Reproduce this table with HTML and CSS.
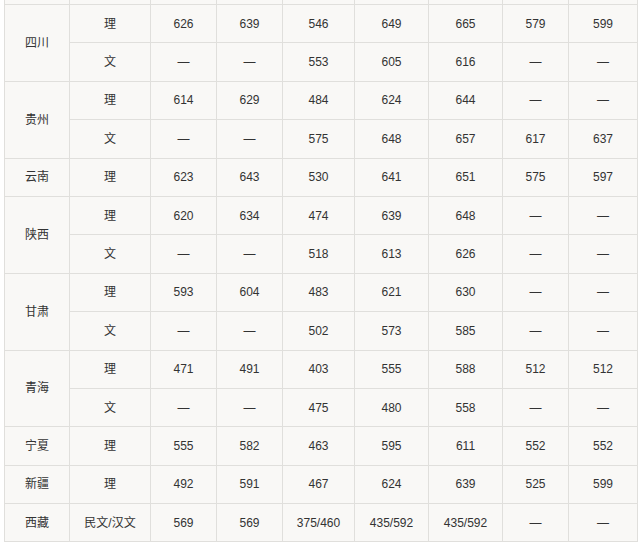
FILE: index.html
```html
<!DOCTYPE html>
<html lang="zh">
<head>
<meta charset="utf-8">
<link rel="stylesheet" href="styles.css">
</head>
<body>
<table class="scores">
  <colgroup>
    <col class="c-prov"><col class="c-type"><col class="c-a"><col class="c-b"><col class="c-c"><col class="c-d"><col class="c-e"><col class="c-f"><col class="c-g">
  </colgroup>
  <tr class="stub"><td></td><td></td><td></td><td></td><td></td><td></td><td></td><td></td><td></td></tr>
  <tr><td rowspan="2" class="prov">四川</td><td>理</td><td>626</td><td>639</td><td>546</td><td>649</td><td>665</td><td>579</td><td>599</td></tr>
  <tr><td>文</td><td>—</td><td>—</td><td>553</td><td>605</td><td>616</td><td>—</td><td>—</td></tr>
  <tr><td rowspan="2" class="prov">贵州</td><td>理</td><td>614</td><td>629</td><td>484</td><td>624</td><td>644</td><td>—</td><td>—</td></tr>
  <tr><td>文</td><td>—</td><td>—</td><td>575</td><td>648</td><td>657</td><td>617</td><td>637</td></tr>
  <tr><td class="prov">云南</td><td>理</td><td>623</td><td>643</td><td>530</td><td>641</td><td>651</td><td>575</td><td>597</td></tr>
  <tr><td rowspan="2" class="prov">陕西</td><td>理</td><td>620</td><td>634</td><td>474</td><td>639</td><td>648</td><td>—</td><td>—</td></tr>
  <tr><td>文</td><td>—</td><td>—</td><td>518</td><td>613</td><td>626</td><td>—</td><td>—</td></tr>
  <tr><td rowspan="2" class="prov">甘肃</td><td>理</td><td>593</td><td>604</td><td>483</td><td>621</td><td>630</td><td>—</td><td>—</td></tr>
  <tr><td>文</td><td>—</td><td>—</td><td>502</td><td>573</td><td>585</td><td>—</td><td>—</td></tr>
  <tr><td rowspan="2" class="prov">青海</td><td>理</td><td>471</td><td>491</td><td>403</td><td>555</td><td>588</td><td>512</td><td>512</td></tr>
  <tr><td>文</td><td>—</td><td>—</td><td>475</td><td>480</td><td>558</td><td>—</td><td>—</td></tr>
  <tr><td class="prov">宁夏</td><td>理</td><td>555</td><td>582</td><td>463</td><td>595</td><td>611</td><td>552</td><td>552</td></tr>
  <tr><td class="prov">新疆</td><td>理</td><td>492</td><td>591</td><td>467</td><td>624</td><td>639</td><td>525</td><td>599</td></tr>
  <tr><td class="prov">西藏</td><td>民文/汉文</td><td>569</td><td>569</td><td>375/460</td><td>435/592</td><td>435/592</td><td>—</td><td>—</td></tr>
</table>
</body>
</html>
```
FILE: styles.css
```css
html, body {
  margin: 0;
  padding: 0;
  background: #ffffff;
}
body {
  padding-left: 4px;
}
.scores {
  border-collapse: collapse;
  table-layout: fixed;
  width: 633px;
  font-family: "Liberation Sans", "Noto Sans CJK SC", sans-serif;
  font-size: 12px;
  color: #333333;
}
.c-prov { width: 65px; }
.c-type { width: 81px; }
.c-a { width: 66px; }
.c-b { width: 66px; }
.c-c { width: 72px; }
.c-d { width: 74px; }
.c-e { width: 74px; }
.c-f { width: 66px; }
.c-g { width: 69px; }
.scores td {
  border: 1px solid #e0dfdc;
  background: #f9f8f6;
  text-align: center;
  vertical-align: middle;
  padding: 0;
  height: 37.4px;
  line-height: 14px;
}
.scores tr.stub td {
  height: 4px;
  border-top: none;
}
```
